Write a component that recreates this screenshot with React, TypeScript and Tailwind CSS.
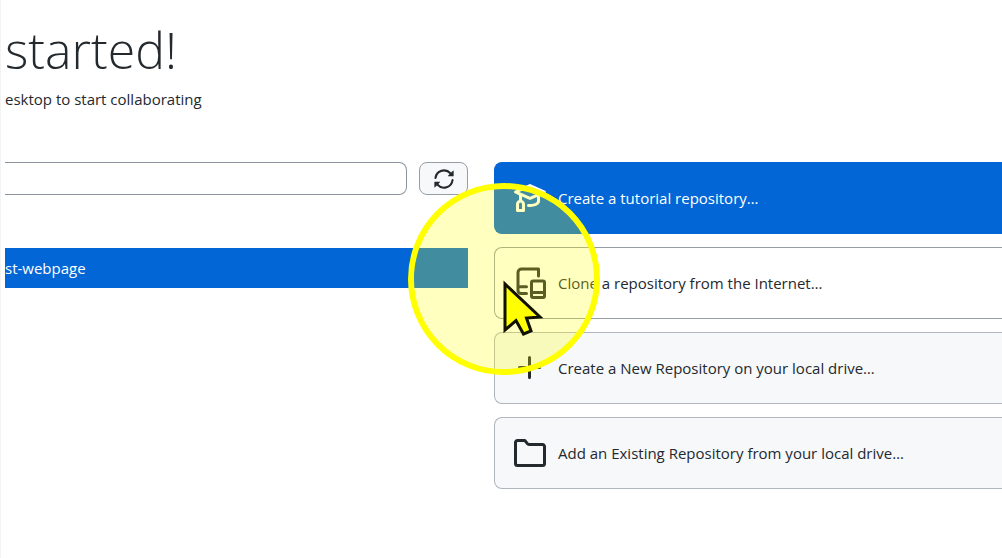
import * as React from 'react';
import { clsx } from 'clsx';

type IconProps = { className?: string };

const MortarBoardIcon = ({ className }: IconProps) => (
  <svg viewBox="0 0 16 16" fill="currentColor" aria-hidden="true" className={className}>
    <path d="M7.693 1.066a.747.747 0 0 1 .614 0l7.25 3.25a.75.75 0 0 1 0 1.368L13 6.831v2.794c0 1.024-.81 1.749-1.66 2.173-.893.447-2.075.702-3.34.702-.278 0-.55-.012-.816-.036a.75.75 0 0 1 .133-1.494c.22.02.45.03.683.03 1.082 0 2.025-.221 2.67-.543.69-.345.83-.682.83-.832V7.503L8.307 8.934a.747.747 0 0 1-.614 0L4 7.28v1.663c.296.105.575.275.812.512.438.438.688 1.059.688 1.796v3a.75.75 0 0 1-.75.75h-3a.75.75 0 0 1-.75-.75v-3c0-.737.25-1.358.688-1.796.237-.237.516-.407.812-.512V6.606L.443 5.684a.75.75 0 0 1 0-1.368ZM2.583 5 8 7.428 13.416 5 8 2.572ZM2.5 11.25v2.25H4v-2.25c0-.388-.125-.611-.25-.735a.697.697 0 0 0-.5-.203.707.707 0 0 0-.5.203c-.125.124-.25.347-.25.735Z" />
  </svg>
);

const CloneIcon = ({ className }: IconProps) => (
  <svg
    viewBox="0 0 32 32"
    fill="none"
    stroke="currentColor"
    strokeWidth="3"
    strokeLinecap="round"
    strokeLinejoin="round"
    aria-hidden="true"
    className={className}
  >
    <path d="M24.5 9V2H7.500a3.500 3.500 0 0 0-3.500 3.500v18a3 3 0 0 0 3 3h5.500M4 19.800h8.500" />
    <rect x="17.500" y="14" width="13" height="16.500" rx="1.500" />
    <path d="M17.500 25.500h13" />
  </svg>
);

const PlusIcon = ({ className }: IconProps) => (
  <svg viewBox="0 0 16 16" fill="currentColor" aria-hidden="true" className={className}>
    <path d="M7.750 2a.75.75 0 0 1 .75.75V7h4.250a.75.75 0 0 1 0 1.500H8.500v4.250a.75.75 0 0 1-1.500 0V8.500H2.750a.75.75 0 0 1 0-1.500H7V2.750A.75.75 0 0 1 7.750 2Z" />
  </svg>
);

const FolderIcon = ({ className }: IconProps) => (
  <svg viewBox="0 0 16 16" fill="currentColor" aria-hidden="true" className={className}>
    <path d="M0 2.750C0 1.784.784 1 1.750 1H5c.55 0 1.070.26 1.400.7l.9 1.200a.25.25 0 0 0 .2.1h6.750c.966 0 1.750.784 1.750 1.750v8.500A1.750 1.750 0 0 1 14.250 15H1.750A1.750 1.750 0 0 1 0 13.250Zm1.750-.25a.25.25 0 0 0-.25.25v10.500c0 .138.112.25.25.25h12.500a.25.25 0 0 0 .25-.25v-8.500a.25.25 0 0 0-.25-.25H7.500c-.55 0-1.070-.26-1.400-.7l-.9-1.200a.25.25 0 0 0-.2-.1Z" />
  </svg>
);

const SyncIcon = ({ className }: IconProps) => (
  <svg viewBox="0 0 16 16" fill="currentColor" aria-hidden="true" className={className}>
    <path
      transform="matrix(-1 0 0 1 16 0)"
      d="M1.705 8.005a.75.75 0 0 1 .834.656 5.500 5.500 0 0 0 9.592 2.970l-1.204-1.204a.25.25 0 0 1 .177-.427h3.646a.25.25 0 0 1 .25.25v3.646a.25.25 0 0 1-.427.177l-1.380-1.380A7.002 7.002 0 0 1 1.050 8.840a.75.75 0 0 1 .656-.834ZM8 2.500a5.487 5.487 0 0 0-4.131 1.869l1.204 1.204A.25.25 0 0 1 4.896 6H1.250A.25.25 0 0 1 1 5.750V2.104a.25.25 0 0 1 .427-.177l1.380 1.380A7.002 7.002 0 0 1 14.950 7.160a.75.75 0 0 1-1.490.178A5.500 5.500 0 0 0 8 2.500Z"
    />
  </svg>
);

const actions = [
  { label: 'Create a tutorial repository…', Icon: MortarBoardIcon, tone: 'border-[#0366d6] bg-[#0366d6] text-white' },
  { label: 'Clone a repository from the Internet…', Icon: CloneIcon, tone: 'border-[#959da5] bg-white text-[#24292e]' },
  { label: 'Create a New Repository on your local drive…', Icon: PlusIcon, tone: 'border-[#b0b6bf] bg-[#f6f8fa] text-[#24292e]' },
  { label: 'Add an Existing Repository from your local drive…', Icon: FolderIcon, tone: 'border-[#b0b6bf] bg-[#f6f8fa] text-[#24292e]' },
];

const PointerHighlight = () => (
  <div className="pointer-events-none absolute top-[183px] left-[407px] h-48 w-48 rounded-full border-6 border-[#ffff00] bg-[#ffff00]/25 bg-clip-padding">
    <svg
      viewBox="0 0 46 64"
      aria-hidden="true"
      className="absolute top-[88px] left-[86px] h-16 w-[46px]"
    >
      <path
        d="M5 7V53L16 43.500L23.500 57L31 54L26.500 41L40 40Z"
        fill="#ffff00"
        stroke="#111100"
        strokeWidth="3"
        strokeLinejoin="miter"
      />
    </svg>
  </div>
);

export default function App() {
  return (
    <div className="relative min-h-screen overflow-hidden border-l border-[#f3f3f3] bg-white pl-1 font-['Open_Sans','Noto_Sans',sans-serif] text-[15px] text-[#24292e]">
      <main className="overflow-hidden">
        <header className="pt-5">
          <h1 className="text-[50px] leading-[60px] font-light">started!</h1>
          <p className="mt-[7px] leading-6">esktop to start collaborating</p>
        </header>

        <div className="mt-[51px] grid grid-cols-[463fr_508fr] gap-x-[26px]">
          <section>
            <div className="flex gap-3">
              <input
                type="text"
                aria-label="Filter your repositories"
                className="h-[33px] min-w-0 flex-1 rounded-r-lg border border-l-0 border-[#8c959f] bg-white px-3 outline-none"
              />
              <button
                type="button"
                aria-label="Refresh the list of repositories"
                className="flex h-[33px] w-[49px] items-center justify-center rounded-lg border border-[#959da5] bg-[#f6f8fa]"
              >
                <SyncIcon className="h-[22px] w-[22px]" />
              </button>
            </div>
            <ul className="mt-[53px]">
              <li className="bg-[#0366d6] text-white">
                <button type="button" className="block h-10 w-full text-left">
                  st-webpage
                </button>
              </li>
            </ul>
          </section>

          <section className="flex flex-col gap-[13px]">
            {actions.map(({ label, Icon, tone }) => (
              <button
                key={label}
                type="button"
                className={clsx(
                  'flex h-[72px] items-center gap-3 rounded-l-lg border border-r-0 pl-[19px] text-left whitespace-nowrap',
                  tone
                )}
              >
                <Icon className="h-8 w-8 shrink-0" />
                <span>{label}</span>
              </button>
            ))}
          </section>
        </div>
      </main>
      <PointerHighlight />
    </div>
  );
}
